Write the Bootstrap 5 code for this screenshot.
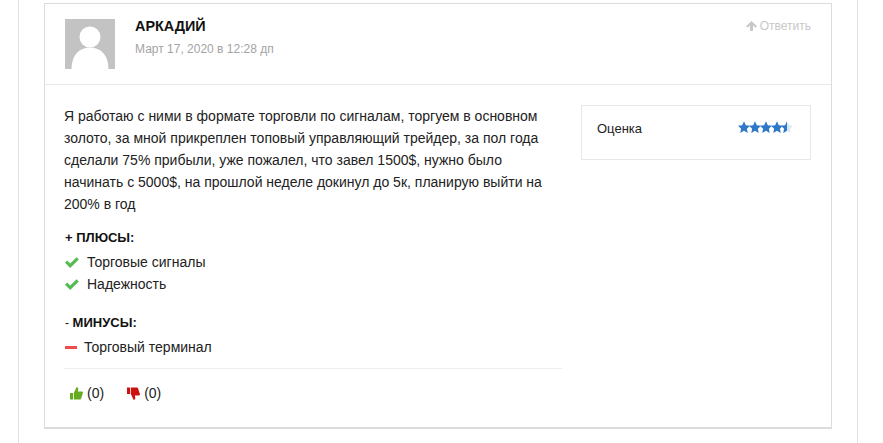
<!DOCTYPE html>
<html lang="ru">
<head>
    <meta charset="UTF-8">
    <meta name="viewport" content="width=device-width, initial-scale=1.0">
    <title>Отзыв</title>
    <link href="https://cdn.jsdelivr.net/npm/bootstrap@5.3.0/dist/css/bootstrap.min.css" rel="stylesheet">
    <style>
        html, body {
            height: 443px;
            overflow: hidden;
        }
        body {
            font-family: "Liberation Sans", Arial, sans-serif;
            font-size: 14px;
            line-height: 22px;
            color: #222;
            background: #fff;
        }
        .review-frame {
            width: 840px;
            height: 443px;
            margin-left: 18px;
            padding: 3px 25px 0;
            border-left: 1px solid #e3e3e3;
            border-right: 1px solid #e3e3e3;
        }
        .review-box {
            width: 788px;
            height: 426px;
            border: 1px solid #dcdcdc;
            border-bottom-width: 2px;
        }
        .review-head {
            height: 81px;
            padding: 15px 20px 0;
            border-bottom: 1px solid #e8e8e8;
        }
        .review-avatar {
            width: 50px;
            height: 50px;
            display: block;
        }
        .review-who {
            margin-left: 20px;
        }
        .review-name {
            font-size: 14.4px;
            line-height: 16px;
            font-weight: 700;
            color: #111;
            margin-top: -1px;
        }
        .review-date {
            font-size: 12px;
            line-height: 16px;
            color: #a3a3a3;
            margin-top: 7px;
        }
        .review-reply {
            font-size: 12px;
            line-height: 16px;
            color: #c8c8c8;
            text-decoration: none;
            margin-top: -1px;
            gap: 3px;
        }
        .review-main {
            padding: 20px 20px 0 19px;
        }
        .review-left {
            width: 498px;
        }
        .review-text {
            margin: 0 0 12px;
        }
        .review-lists {
            padding-left: 1px;
        }
        .review-label {
            font-size: 13px;
            font-weight: 700;
            color: #111;
            line-height: 22px;
            margin-bottom: 2px;
        }
        .label-sign {
            font-weight: 400;
            font-size: 12px;
        }
        .review-item {
            line-height: 22px;
        }
        .review-minus-head {
            margin-top: 17px;
            margin-bottom: 2px;
        }
        .mark-bar {
            width: 12px;
            height: 3px;
            background: #ee4d4d;
            margin-right: 7px;
        }
        .vote-row {
            border-top: 1px solid #eee;
            margin-top: 10px;
            padding-top: 13px;
            padding-left: 6px;
        }
        .rating-box {
            width: 230px;
            height: 55px;
            margin-left: 19px;
            padding: 12px 17px 0 15px;
            border: 1px solid #e8e8e8;
            color: #222;
            font-size: 13px;
        }
        .rating-stars {
            margin-top: 3px;
        }
    </style>
</head>
<body>
    <div class="review-frame">
        <div class="review-box">
            <div class="review-head d-flex align-items-start">
                <svg class="review-avatar flex-shrink-0" viewBox="0 0 50 50">
                    <rect width="50" height="50" fill="#c3c3c3"/>
                    <circle cx="25" cy="18" r="10.5" fill="#fff"/>
                    <path d="M6.500 50c0-14 8-21.500 18.500-21.500S43.500 36 43.500 50z" fill="#fff"/>
                </svg>
                <div class="review-who flex-grow-1">
                    <div class="review-name">АРКАДИЙ</div>
                    <div class="review-date">Март 17, 2020 в 12:28 дп</div>
                </div>
                <a class="review-reply d-flex align-items-center" href="#">
                    <svg width="11" height="12" viewBox="0 0 12 12"><path d="M6 .5 12 6.300 10.300 8 7.700 5.400V11.500H4.300V5.400L1.700 8 0 6.300z" fill="#c8c8c8"/></svg>
                    Ответить
                </a>
            </div>
            <div class="review-main d-flex align-items-start">
                <div class="review-left">
                    <p class="review-text">Я работаю с ними в формате торговли по сигналам, торгуем в основном золото, за мной прикреплен топовый управляющий трейдер, за пол года сделали 75% прибыли, уже пожалел, что завел 1500$, нужно было начинать с 5000$, на прошлой неделе докинул до 5к, планирую выйти на 200% в год</p>
                    <div class="review-lists">
                        <div class="review-label">+ ПЛЮСЫ:</div>
                        <div class="review-item d-flex align-items-center">
                            <svg class="me-2" width="14" height="11" viewBox="0 0 14 11"><path d="M0 5.800 2.200 3.600 5.200 6.600 11.600 .2 13.800 2.400 5.200 11z" fill="#55bb55"/></svg>
                            <span>Торговые сигналы</span>
                        </div>
                        <div class="review-item d-flex align-items-center">
                            <svg class="me-2" width="14" height="11" viewBox="0 0 14 11"><path d="M0 5.800 2.200 3.600 5.200 6.600 11.600 .2 13.800 2.400 5.200 11z" fill="#55bb55"/></svg>
                            <span>Надежность</span>
                        </div>
                        <div class="review-label review-minus-head"><span class="label-sign">-</span> МИНУСЫ:</div>
                        <div class="review-item d-flex align-items-center">
                            <span class="mark-bar"></span>
                            <span>Торговый терминал</span>
                        </div>
                    </div>
                    <div class="vote-row d-flex align-items-center">
                        <svg width="13" height="13" viewBox="0 0 13 13"><path d="M0 6h3v6.500H0zM3.800 6 6.500.3c1.500 0 2 1 1.700 2.200L7.800 4.500h4c1 0 1.400 1 1 1.800l-1.800 5.500c-.2.500-.6.700-1 .7H3.800z" fill="#66aa22"/></svg>
                        <span class="ms-1">(0)</span>
                        <svg style="margin-left:23px" width="13" height="13" viewBox="0 0 13 13"><path d="M0 .5h3V7H0zM3.800 7l2.700 5.700c1.500 0 2-1 1.700-2.200L7.800 8.500h4c1 0 1.400-1 1-1.800L11 1.200C10.800.7 10.400.5 10 .5H3.800z" fill="#cc1111"/></svg>
                        <span class="ms-1">(0)</span>
                    </div>
                </div>
                <div class="rating-box d-flex justify-content-between align-items-start">
                    <span>Оценка</span>
                    <svg class="rating-stars" width="55" height="13" viewBox="0 0 55 13">
                        <defs>
                            <path id="rate-star" d="M6 .3 7.800 4.300 12 4.800 8.900 7.700 9.700 12 6 9.800 2.300 12 3.100 7.700 0 4.800 4.200 4.300z"/>
                            <clipPath id="half-star"><rect x="43" y="0" width="6" height="13"/></clipPath>
                        </defs>
                        <use href="#rate-star" fill="#2f78c8"/>
                        <use href="#rate-star" x="11" fill="#2f78c8"/>
                        <use href="#rate-star" x="22" fill="#2f78c8"/>
                        <use href="#rate-star" x="33" fill="#2f78c8"/>
                        <use href="#rate-star" x="43" fill="#dbe8f4"/>
                        <g clip-path="url(#half-star)"><use href="#rate-star" x="43" fill="#2f78c8"/></g>
                    </svg>
                </div>
            </div>
        </div>
    </div>

    <script src="https://cdn.jsdelivr.net/npm/bootstrap@5.3.0/dist/js/bootstrap.bundle.min.js"></script>
</body>
</html>
